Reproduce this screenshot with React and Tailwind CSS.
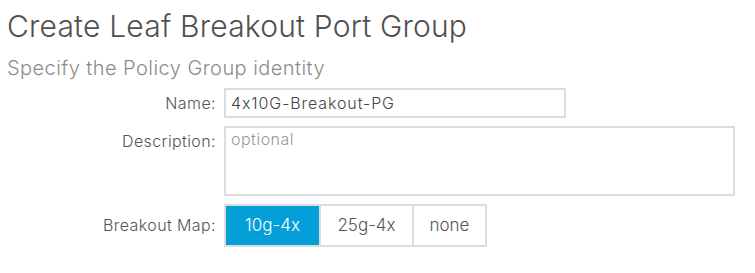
import React, { useState } from 'react';

const maps = ['10g-4x', '25g-4x', 'none'];

const App = () => {
  const [selected, setSelected] = useState('10g-4x');

  return (
    <div className="w-[755px] h-[273px] bg-white overflow-hidden font-['Inter',sans-serif] [font-feature-settings:'calt'_0]">
      <div className="pl-[7px] pt-[8px]">
        <h1 className="text-[30px] leading-[36px] font-light tracking-[0.2px] text-[#505050]">Create Leaf Breakout Port Group</h1>
        <h2 className="mt-[12px] text-[20px] leading-[24px] font-light tracking-[0.45px] text-[#8c8c8c]">Specify the Policy Group identity</h2>
      </div>

      <div className="mt-[8px] grid grid-cols-[216px_1fr] gap-x-[8px] items-start">
        <label className="text-[16px] leading-[30px] font-light tracking-[0.4px] text-[#555] text-right">Name:</label>
        <input
          defaultValue="4x10G-Breakout-PG"
          className="w-[342px] h-[30px] px-[5px] border-2 border-[#dcdcdc] text-[16px] font-light tracking-[0.9px] text-[#444] outline-none"
        />

        <label className="mt-[8px] text-[16px] leading-[30px] font-light tracking-[0.4px] text-[#555] text-right">Description:</label>
        <textarea
          placeholder="optional"
          className="mt-[8px] w-[511px] h-[70px] px-[5px] py-0 border-2 border-[#dcdcdc] text-[16px] leading-[22px] font-light tracking-[0.5px] text-[#444] placeholder:text-[#999] resize-none outline-none"
        />

        <label className="mt-[8px] text-[16px] leading-[43px] font-light tracking-[0.4px] text-[#555] text-right">Breakout Map:</label>
        <div className="mt-[8px] flex border-2 border-[#dcdcdc] w-fit">
          {maps.map((m, i) => (
            <button
              key={m}
              onClick={() => setSelected(m)}
              className={`h-[39px] text-[17px] font-light ${i < 2 ? 'w-[93px]' : 'w-[73px]'} ${i > 0 ? 'border-l-2 border-[#dcdcdc]' : ''} ${selected === m ? 'bg-[#049fd9] text-white' : 'bg-white text-[#555]'}`}
            >
              {m}
            </button>
          ))}
        </div>
      </div>
    </div>
  );
};

export default App;
